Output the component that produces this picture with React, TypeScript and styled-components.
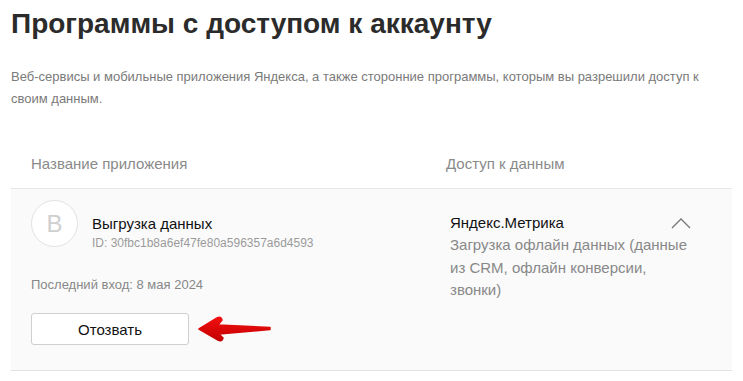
import styled, { createGlobalStyle } from "styled-components";

const GlobalStyle = createGlobalStyle`
    body {
        margin: 0;
        background: #fff;
        font-family: Arial, "Liberation Sans", sans-serif;
        color: #222;
    }
`;

const Page = styled.div`
    padding: 6px 11px 0 11px;
    width: 721px;
`;

const Title = styled.h1`
    margin: 0;
    font-size: 28px;
    line-height: 36px;
    font-weight: 700;
    color: #2b2b2b;
`;

const Lead = styled.p`
    margin: 24px 0 0;
    font-size: 13px;
    line-height: 22px;
    color: #7a7a7a;
`;

const Table = styled.div`
    margin-top: 44px;
`;

const HeadRow = styled.div`
    display: grid;
    grid-template-columns: 415px 1fr;
    padding: 0 0 14px 20px;
    border-bottom: 1px solid #e6e6e6;
    font-size: 15px;
    line-height: 20px;
    color: #8a8a8a;
`;

const AppRow = styled.div`
    display: grid;
    grid-template-columns: 419px 1fr;
    padding: 11px 0 25px 20px;
    background: #fafafa;
    border-bottom: 1px solid #e3e3e3;
`;

const AppHead = styled.div`
    display: flex;
    align-items: flex-start;
    gap: 14px;
`;

const Avatar = styled.div`
    width: 45px;
    height: 45px;
    border: 1px solid #e2e2e2;
    border-radius: 50%;
    background: #fff;
    display: grid;
    place-content: center;
    font-size: 24px;
    color: #cfcfcf;
`;

const AppText = styled.div`
    padding-top: 13px;
`;

const AppName = styled.div`
    font-size: 15px;
    line-height: 22px;
    color: #111;
`;

const AppId = styled.div`
    font-size: 12px;
    line-height: 16px;
    color: #9a9a9a;
`;

const LastLogin = styled.div`
    margin-top: 25px;
    font-size: 13px;
    line-height: 18px;
    color: #888;
`;

const Actions = styled.div`
    margin-top: 19px;
    display: flex;
    align-items: center;
    gap: 8px;
`;

const RevokeButton = styled.button`
    width: 158px;
    height: 32px;
    border: 1px solid #cfcfcf;
    border-radius: 3px;
    background: #fff;
    font-family: Arial, "Liberation Sans", sans-serif;
    font-size: 15px;
    color: #111;
    padding: 0;
`;

const Access = styled.div`
    padding-top: 12px;
    width: 243px;
`;

const AccessTitle = styled.div`
    display: flex;
    justify-content: space-between;
    align-items: center;
    width: 241px;
    font-size: 15px;
    line-height: 22px;
    color: #111;
`;

const AccessText = styled.div`
    font-size: 15px;
    line-height: 22.5px;
    color: #888;
`;

const Chevron = () => (
    <svg width="20" height="12" viewBox="0 0 20 12">
        <path d="M1 11 L10 2 L19 11" fill="none" stroke="#777" strokeWidth="1.3" />
    </svg>
);

const RedArrow = () => (
    <svg width="76" height="28" viewBox="0 0 76 28">
        <defs>
            <linearGradient id="arr" x1="0" y1="0" x2="0" y2="1">
                <stop offset="0" stopColor="#f21010" />
                <stop offset="1" stopColor="#c40000" />
            </linearGradient>
        </defs>
        <path
            d="M2 14 L20 3 Q24 1 25 5 L21 10 L73 12.5 L73 14.5 L22 19 L26 23 Q25 27 21 25 Z"
            fill="url(#arr)"
            stroke="url(#arr)"
            strokeWidth="1.5"
            strokeLinejoin="round"
        />
    </svg>
);

export default function App() {
    return (
        <>
            <GlobalStyle />
            <Page>
                <Title>Программы с доступом к аккаунту</Title>
                <Lead>
                    Веб-сервисы и мобильные приложения Яндекса, а также сторонние программы, которым вы разрешили доступ к своим данным.
                </Lead>

                <Table>
                    <HeadRow>
                        <div>Название приложения</div>
                        <div>Доступ к данным</div>
                    </HeadRow>

                    <AppRow>
                        <div>
                            <AppHead>
                                <Avatar>B</Avatar>
                                <AppText>
                                    <AppName>Выгрузка данных</AppName>
                                    <AppId>ID: 30fbc1b8a6ef47fe80a596357a6d4593</AppId>
                                </AppText>
                            </AppHead>
                            <LastLogin>Последний вход: 8 мая 2024</LastLogin>
                            <Actions>
                                <RevokeButton>Отозвать</RevokeButton>
                                <RedArrow />
                            </Actions>
                        </div>

                        <Access>
                            <AccessTitle>
                                Яндекс.Метрика
                                <Chevron />
                            </AccessTitle>
                            <AccessText>
                                Загрузка офлайн данных (данные из CRM, офлайн конверсии, звонки)
                            </AccessText>
                        </Access>
                    </AppRow>
                </Table>
            </Page>
        </>
    );
}
